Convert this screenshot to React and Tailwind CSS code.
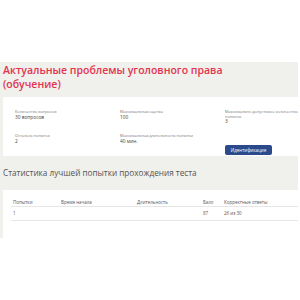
export default function App() {
    const font = { fontFamily: '"Open Sans", "Liberation Sans", sans-serif' };
    return (
        <div className="w-[300px] h-[300px] bg-white overflow-hidden" style={font}>
            <div className="h-[62px]" />
            <div className="bg-[#f0f0ed] mr-[2px] pl-[3px]">
                <h1 className="text-[#e3344f] text-[10.5px] leading-[14px] font-semibold pt-[1px]">
                    Актуальные проблемы уголовного права
                    <br />
                    (обучение)
                </h1>
                <div className="bg-white mt-[6px] h-[59px] pl-[12px] pt-[13px] grid grid-cols-[105px_105px_1fr] grid-rows-[24px_20px] text-[#444]">
                    <div>
                        <div className="text-[3.9px] leading-[4.5px] text-[#777]">Количество вопросов</div>
                        <div className="text-[4.8px] leading-[5.5px]">30 вопросов</div>
                    </div>
                    <div>
                        <div className="text-[3.9px] leading-[4.5px] text-[#777]">Максимальная оценка</div>
                        <div className="text-[4.8px] leading-[5.5px]">100</div>
                    </div>
                    <div>
                        <div className="text-[3.9px] leading-[4.5px] text-[#777] whitespace-nowrap">
                            Максимально допустимое количество
                            <br />
                            попыток
                        </div>
                        <div className="text-[4.8px] leading-[5.5px]">3</div>
                    </div>
                    <div>
                        <div className="text-[3.9px] leading-[4.5px] text-[#777]">Осталось попыток</div>
                        <div className="text-[4.8px] leading-[5.5px]">2</div>
                    </div>
                    <div>
                        <div className="text-[3.9px] leading-[4.5px] text-[#777]">Максимальная длительность попытки</div>
                        <div className="text-[4.8px] leading-[5.5px]">40 мин.</div>
                    </div>
                    <div>
                        <button className="bg-[#2b4a8b] text-white text-[4.5px] leading-[10px] h-[10px] w-[47px] rounded-[2px] -mt-[3px]">
                            Идентификация
                        </button>
                    </div>
                </div>
                <h2 className="text-[#555] text-[8.2px] leading-[34px] font-normal">
                    Статистика лучшей попытки прохождения теста
                </h2>
                <div className="bg-white h-[48px] pl-[8px] pt-[8px] text-[4.5px] text-[#555]">
                    <div className="grid grid-cols-[48px_76px_66px_21px_1fr] h-[9px] items-center border-b border-[#e6e6e6] pl-[2px]">
                        <div>Попытки</div>
                        <div>Время начала</div>
                        <div>Длительность</div>
                        <div>Балл</div>
                        <div>Корректные ответы</div>
                    </div>
                    <div className="grid grid-cols-[48px_76px_66px_21px_1fr] h-[14px] items-center border-b border-[#e6e6e6] pl-[2px]">
                        <div>1</div>
                        <div></div>
                        <div></div>
                        <div>87</div>
                        <div>26 из 30</div>
                    </div>
                </div>
            </div>
        </div>
    );
}
